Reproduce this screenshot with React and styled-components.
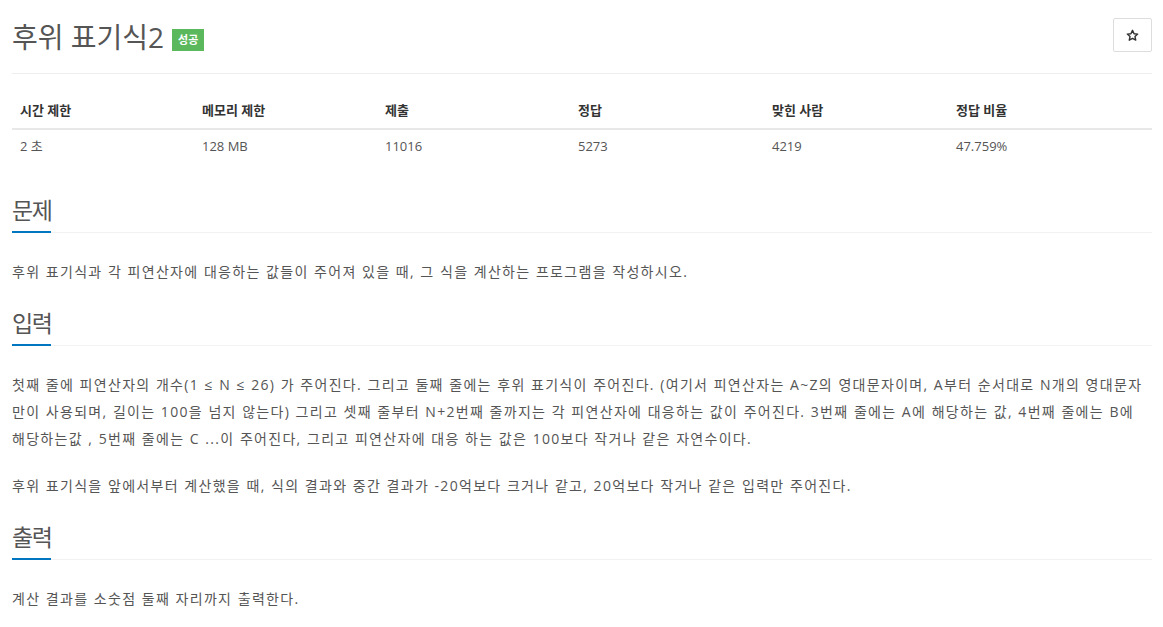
import React from "react";
import styled, { createGlobalStyle } from "styled-components";

const GlobalStyle = createGlobalStyle`
  body {
    margin: 0;
    background: #fff;
    font-family: "Open Sans", "Noto Sans CJK KR", sans-serif;
    color: #555;
  }
`;

const stats = [
  { label: "시간 제한", value: "2 초" },
  { label: "메모리 제한", value: "128 MB" },
  { label: "제출", value: "11016" },
  { label: "정답", value: "5273" },
  { label: "맞힌 사람", value: "4219" },
  { label: "정답 비율", value: "47.759%" },
];

const colWidths = [182, 183, 193, 194, 184, 204];

function StarIcon() {
  return (
    <svg width="13" height="13" viewBox="0 0 24 24" fill="none" stroke="#333" strokeWidth="2.6" strokeLinejoin="round">
      <path d="M12 2.5l2.9 6.2 6.7.7-5 4.6 1.4 6.6L12 17.3l-6 3.3 1.4-6.6-5-4.6 6.7-.7z" />
    </svg>
  );
}

function App() {
  return (
    <Page>
      <GlobalStyle />
      <Header>
        <Title>
          후위 표기식2 <Badge>성공</Badge>
        </Title>
        <StarButton>
          <StarIcon />
        </StarButton>
      </Header>

      <StatTable>
        <colgroup>
          {colWidths.map((w, i) => (
            <col key={i} style={{ width: w }} />
          ))}
        </colgroup>
        <thead>
          <tr>
            {stats.map((s) => (
              <Th key={s.label}>{s.label}</Th>
            ))}
          </tr>
        </thead>
        <tbody>
          <tr>
            {stats.map((s) => (
              <Td key={s.label}>{s.value}</Td>
            ))}
          </tr>
        </tbody>
      </StatTable>

      <Section>
        <Headline>
          <h2>문제</h2>
        </Headline>
        <Body>
          <p>후위 표기식과 각 피연산자에 대응하는 값들이 주어져 있을 때, 그 식을 계산하는 프로그램을 작성하시오.</p>
        </Body>
      </Section>

      <Section>
        <Headline>
          <h2>입력</h2>
        </Headline>
        <Body>
          <p>
            첫째 줄에 피연산자의 개수(1 ≤ N ≤ 26) 가 주어진다. 그리고 둘째 줄에는 후위 표기식이 주어진다. (여기서 피연산자는 A~Z의 영대문자이며, A부터 순서대로 N개의 영대문자만이 사용되며, 길이는 100을 넘지 않는다) 그리고 셋째 줄부터 N+2번째 줄까지는 각 피연산자에 대응하는 값이 주어진다. 3번째 줄에는 A에 해당하는 값, 4번째 줄에는 B에 해당하는값 , 5번째 줄에는 C ...이 주어진다, 그리고 피연산자에 대응 하는 값은 100보다 작거나 같은 자연수이다.
          </p>
          <p>후위 표기식을 앞에서부터 계산했을 때, 식의 결과와 중간 결과가 -20억보다 크거나 같고, 20억보다 작거나 같은 입력만 주어진다.</p>
        </Body>
      </Section>

      <Section>
        <Headline>
          <h2>출력</h2>
        </Headline>
        <Body>
          <p>계산 결과를 소숫점 둘째 자리까지 출력한다.</p>
        </Body>
      </Section>
    </Page>
  );
}

export default App;

const Page = styled.div`
  width: 1140px;
  padding: 18px 11px 0 12px;
`;

const Header = styled.div`
  display: flex;
  justify-content: space-between;
  align-items: flex-start;
  padding-bottom: 19px;
  border-bottom: 1px solid #eee;
  margin-bottom: 18px;
`;

const Title = styled.h1`
  margin: 2px 0 0;
  font-size: 28px;
  font-weight: 400;
  line-height: 34px;
  color: #555;
  display: flex;
  align-items: center;
  gap: 8px;
`;

const Badge = styled.span`
  display: inline-block;
  background: #5cb85c;
  color: #fff;
  font-size: 11px;
  font-weight: 700;
  line-height: 14px;
  padding: 4px 6px;
  margin-top: 6px;
`;

const StarButton = styled.button`
  width: 39px;
  height: 34px;
  border: 1px solid #ddd;
  border-radius: 2px;
  background: #fff;
  padding: 0;
  display: flex;
  align-items: center;
  justify-content: center;
  cursor: pointer;
`;

const StatTable = styled.table`
  width: 100%;
  border-collapse: collapse;
  table-layout: fixed;
  font-size: 13px;
  margin-bottom: 30px;
`;

const Th = styled.th`
  text-align: left;
  font-weight: 700;
  color: #333;
  padding: 8px;
  line-height: 20px;
  border-bottom: 2px solid #e8e8e8;
`;

const Td = styled.td`
  padding: 6px 8px 8px;
  line-height: 20px;
  color: #555;
`;

const Section = styled.section`
  padding-bottom: 22px;
`;

const Headline = styled.div`
  border-bottom: 1px solid #f2f2f2;
  margin-bottom: 25px;
  h2 {
    display: inline-block;
    margin: 0;
    font-size: 23px;
    letter-spacing: -1.5px;
    font-weight: 400;
    line-height: 32px;
    padding-bottom: 5px;
    color: #555;
    border-bottom: 2px solid #0076c0;
    margin-bottom: -1px;
  }
`;

const Body = styled.div`
  font-size: 14px;
  letter-spacing: 1.3px;
  word-spacing: 0.5px;
  line-height: 27px;
  color: #555;
  p {
    margin: 0 0 20px;
  }
  p:last-child {
    margin-bottom: 0;
  }
`;
